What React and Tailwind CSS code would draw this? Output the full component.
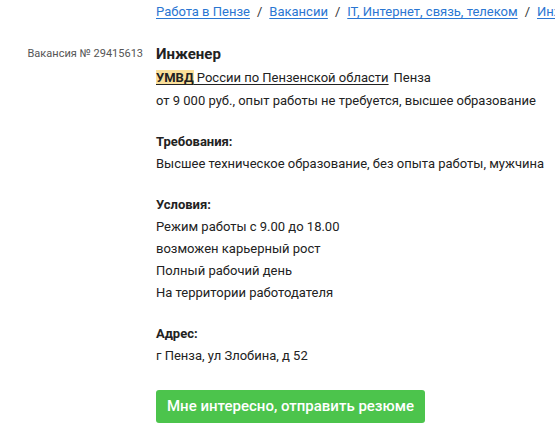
import React from 'react'

const crumbs = ['Работа в Пензе', 'Вакансии', 'IT, Интернет, связь, телеком', 'Инженер']

function Section({ title, lines }) {
  return (
    <div className="mt-[19px]">
      <div className="font-bold leading-[22px]">{title}</div>
      {lines.map((l) => (
        <div key={l} className="leading-[22px]">{l}</div>
      ))}
    </div>
  )
}

export default function App() {
  return (
    <div
      className="w-[555px] h-[434px] overflow-hidden bg-white text-[13px] text-[#222]"
      style={{ fontFamily: 'Roboto, "Liberation Sans", sans-serif' }}
    >
      {/* Breadcrumbs */}
      <div className="flex items-center pl-[156px] h-[24px] whitespace-nowrap">
        {crumbs.map((c, i) => (
          <React.Fragment key={c}>
            {i > 0 && <span className="mx-[7px] text-[#333]">/</span>}
            <a href="#" className="text-[#2a76d2] underline underline-offset-2 decoration-1">{c}</a>
          </React.Fragment>
        ))}
      </div>

      <div className="flex mt-[18px]">
        <div className="w-[156px] shrink-0 pr-[13px] text-right text-[11px] text-[#555] leading-[24px]">
          Вакансия № 29415613
        </div>
        <div className="flex-1 min-w-0 whitespace-nowrap">
          <h1 className="text-[15px] font-bold leading-[24px]">Инженер</h1>
          <div className="leading-[23px]">
            <a href="#" className="underline underline-offset-2 decoration-1 text-[#222]">
              <span className="bg-[#fbe09a] font-bold">УМВД</span> России по Пензенской области
            </a>
            <span className="ml-[5px]">Пенза</span>
          </div>
          <div className="leading-[23px]">от 9 000 руб., опыт работы не требуется, высшее образование</div>

          <Section title="Требования:" lines={['Высшее техническое образование, без опыта работы, мужчина']} />
          <Section
            title="Условия:"
            lines={['Режим работы с 9.00 до 18.00', 'возможен карьерный рост', 'Полный рабочий день', 'На территории работодателя']}
          />
          <Section title="Адрес:" lines={['г Пенза, ул Злобина, д 52']} />

          <button className="mt-[23px] h-[33px] px-[11px] rounded-[3px] bg-[#4cc44c] text-white text-[15px] font-medium">
            Мне интересно, отправить резюме
          </button>
        </div>
      </div>
    </div>
  )
}
